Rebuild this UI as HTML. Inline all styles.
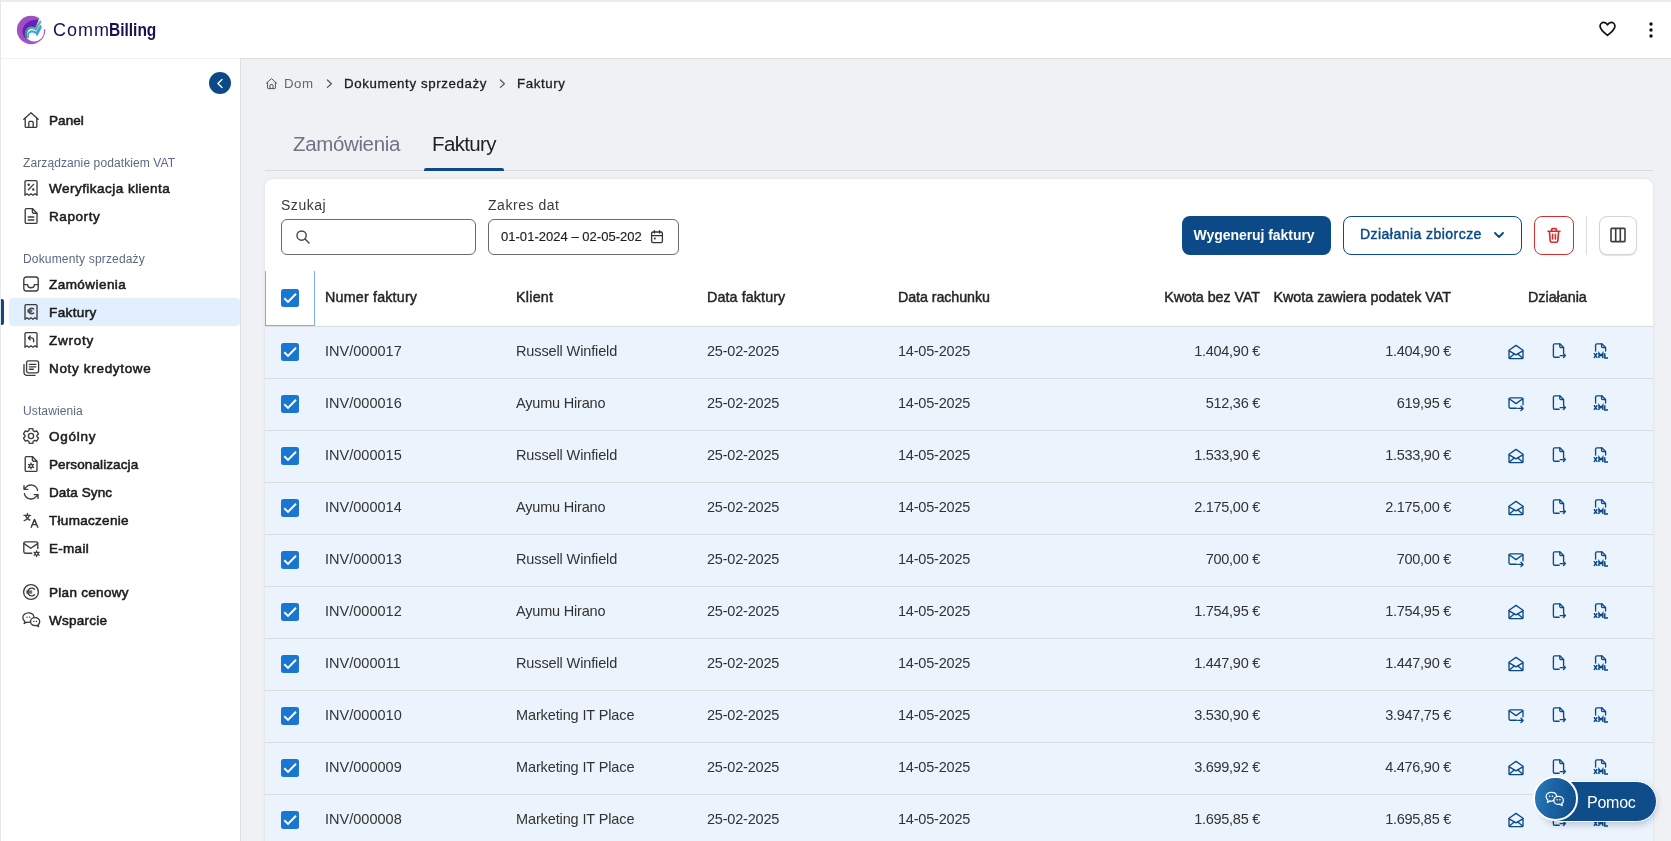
<!DOCTYPE html>
<html lang="pl">
<head>
<meta charset="utf-8">
<title>CommBilling - Faktury</title>
<style>
*{box-sizing:border-box;margin:0;padding:0}
html,body{width:1671px;height:841px;overflow:hidden;background:#f0f1f4;font-family:"Liberation Sans",sans-serif;color:#222}
.abs{position:absolute}
#app{will-change:transform;position:relative;width:1671px;height:841px;overflow:hidden;background:#f0f1f4}
/* top header */
#topbar{position:absolute;left:0;top:0;width:1671px;height:59px;background:#fff;border-top:2px solid #ececec;border-bottom:1px solid #dcdee2}
#leftedge{position:absolute;left:0;top:0;width:1px;height:841px;background:#e6e6e9;z-index:5}
#logotext{position:absolute;left:53px;top:18px;font-size:18px;line-height:24px;color:#1b1150;white-space:nowrap;letter-spacing:0}
#logotext2{position:absolute;left:109px;top:18px;font-size:18px;line-height:24px;color:#1b1150;white-space:nowrap;transform:scaleX(0.86);transform-origin:0 0}
/* sidebar */
#sidebar{position:absolute;left:0;top:59px;width:241px;height:782px;background:#fff;border-right:1px solid #dcdfe4}
.nav{position:absolute;left:49px;margin-top:1px;height:20px;line-height:20px;font-size:13.5px;font-weight:normal;-webkit-text-stroke:0.55px #1c1c1c;color:#1c1c1c;white-space:nowrap}
.sec{position:absolute;left:23px;height:16px;line-height:16px;font-size:12px;color:#5d6885;white-space:nowrap}
.ico{position:absolute;left:21px;width:20px;height:20px}
.ico svg{display:block;width:20px;height:20px;fill:none;stroke:#3c3c3c;stroke-width:1.35;stroke-linecap:round;stroke-linejoin:round}
#active{position:absolute;left:9px;top:298px;width:231px;height:28px;background:#e1efff;border-radius:4px}
#activebar{position:absolute;left:1px;top:299px;width:3px;height:26px;background:#0c4a87;border-radius:0 2px 2px 0}
#collapse{position:absolute;left:209px;top:72px;width:22px;height:22px;border-radius:50%;background:#0c4a87}
/* main */
.bc{position:absolute;top:75px;height:18px;line-height:18px;font-size:13.3px;white-space:nowrap}
.tab{position:absolute;top:130px;height:28px;line-height:28px;font-size:20.5px;white-space:nowrap}
#tabline{position:absolute;left:265px;top:170px;width:1388px;height:1px;background:#d9dbe0}
#tabul{position:absolute;left:424px;top:168px;width:80px;height:3px;background:#0c4a87;border-radius:2px 2px 0 0}
#card{position:absolute;left:265px;top:179px;width:1388px;height:680px;background:#fff;border-radius:8px 8px 0 0;box-shadow:0 0 3px rgba(20,30,50,0.11)}
.lbl{position:absolute;top:196px;height:18px;line-height:18px;font-size:14px;color:#3a3a3a;white-space:nowrap}
.inp{position:absolute;top:219px;height:36px;border:1px solid #6a6a6a;border-radius:6px;background:#fff}
.btn{position:absolute;top:216px;height:39px;border-radius:8px;font-size:14px;font-weight:bold;line-height:37px;white-space:nowrap}
/* table */
.th{position:absolute;top:288px;height:18px;line-height:18px;font-size:14.3px;font-weight:normal;-webkit-text-stroke:0.45px #262626;color:#262626;white-space:nowrap}
.row{position:absolute;left:265px;width:1388px;height:52px;background:#ebf3fc;border-top:1px solid #dcdcdc}
.td{position:absolute;top:15px;height:18px;line-height:18px;font-size:14.5px;color:#333;white-space:nowrap}
.r{text-align:right}
.cb{position:absolute;left:16px;top:16px;width:18px;height:18px;border-radius:2.5px;background:#1976d2}
.cb svg{display:block;width:18px;height:18px}
.act{position:absolute;top:15px;width:20px;height:20px}
.act svg{display:block;width:20px;height:20px;fill:none;stroke:#0c4a87;stroke-width:1.35;stroke-linecap:round;stroke-linejoin:round}
#n1{letter-spacing:0.067px}
#n2{letter-spacing:0.472px}
#n3{letter-spacing:0.586px}
#n4{letter-spacing:0.447px}
#n5{letter-spacing:0.381px}
#n6{letter-spacing:0.760px}
#n7{letter-spacing:0.673px}
#n8{letter-spacing:0.744px}
#n9{letter-spacing:0.108px}
#n10{letter-spacing:0.090px}
#n11{letter-spacing:0.297px}
#n12{letter-spacing:0.287px}
#n13{letter-spacing:0.295px}
#n14{letter-spacing:0.248px}
#s1{letter-spacing:0.103px}
#s2{letter-spacing:0.171px}
#s3{letter-spacing:0.122px}
#bc1{letter-spacing:0.511px}
#bc2{letter-spacing:0.602px}
#bc3{letter-spacing:0.576px}
#tab1{letter-spacing:-0.359px}
#tab2{letter-spacing:-0.643px}
#lbl1{letter-spacing:0.534px}
#lbl2{letter-spacing:0.540px}
#daterange{letter-spacing:0.027px}
#btn1{letter-spacing:-0.049px}
#btn2{letter-spacing:0.458px}
#h1{letter-spacing:0.185px}
#h2{letter-spacing:0.247px}
#h3{letter-spacing:0.102px}
#h4{letter-spacing:-0.083px}
#h5{letter-spacing:-0.052px}
#h6{letter-spacing:0.001px}
#h7{letter-spacing:-0.002px}
#pomoc{letter-spacing:-0.249px}
#lt1{letter-spacing:1.000px}
.c1{letter-spacing:0.012px}
.c3{letter-spacing:-0.197px}
.c4{letter-spacing:-0.197px}
.c5{letter-spacing:-0.272px}
.c6{letter-spacing:-0.272px}
.nrw{letter-spacing:-0.124px}
.nah{letter-spacing:-0.192px}
.nmp{letter-spacing:-0.125px}
</style>
</head>
<body>
<div id="app">
<div id="topbar"></div>
<div id="leftedge"></div>
<svg class="abs" style="left:16px;top:15px" width="31" height="31" viewBox="0 0 31 31">
  <defs>
    <linearGradient id="lg1" x1="0" y1="0" x2="0.6" y2="1"><stop offset="0" stop-color="#9c4fbe"/><stop offset="1" stop-color="#a653c4"/></linearGradient>
    <linearGradient id="lg3" x1="0" y1="1" x2="1" y2="0"><stop offset="0" stop-color="#3d8a6e"/><stop offset="0.5" stop-color="#5aa890"/><stop offset="1" stop-color="#66b89c"/></linearGradient>
  </defs>
  <circle cx="15.1" cy="15" r="14.2" fill="url(#lg1)"/>
  <circle cx="18.2" cy="16.6" r="9.9" fill="#fff"/>
  <path d="M24.6 2 L19.2 9.8 L23 13 L31 15 V0 H24 Z" fill="#fff"/>
  <path d="M22.6 5 C16.4 3.4 7.6 7.6 6.6 15 C6.2 18.6 7.4 21.6 9.4 23.6 L10.6 22 C9.4 18.4 9.8 15 12.4 13.4 C14.6 12 17.2 12.4 19.2 13.6 Z" fill="#6420be"/>
  <path d="M11.7 23.2 C10.9 19.5 11.8 16.8 14.2 15.7 C16 14.9 17.9 15.4 19.9 16.7 L24.6 9.6 L25.9 12.2 L21.2 21.4 L19.6 18.7 C17.4 17.3 15.4 17.1 14 18.1 C12.7 19.2 12.7 21 13 22.7 Z" fill="#41a0e2"/>
  <path d="M10.4 22.2 C9.5 17.8 10.6 14.4 13.5 13.2 C15.6 12.3 17.6 12.7 19.6 14.1 L24.2 6.8" fill="none" stroke="url(#lg3)" stroke-width="2.5" stroke-linecap="round" stroke-linejoin="miter"/>
</svg>
<div id="logotext"><span id="lt1">Comm</span></div><div id="logotext2"><b id="lt2">Billing</b></div>
<svg class="abs" style="left:1596.6px;top:19.4px" width="21" height="19.1" viewBox="0 0 22 20" fill="none" stroke="#111" stroke-width="1.8" stroke-linejoin="round">
  <path d="M11 17.2 C6.2 13.4 3.2 10.8 3.2 7.6 C3.2 5.2 5 3.6 7 3.6 C8.6 3.6 10 4.5 11 6 C12 4.5 13.4 3.6 15 3.6 C17 3.6 18.8 5.2 18.8 7.6 C18.8 10.8 15.8 13.4 11 17.2 Z"/>
</svg>
<svg class="abs" style="left:1647px;top:20px" width="8" height="20" viewBox="0 0 8 20" fill="#111">
  <circle cx="4" cy="4" r="1.7"/><circle cx="4" cy="10" r="1.7"/><circle cx="4" cy="16" r="1.7"/>
</svg>
<div id="sidebar"></div><div id="hb2" class="abs" style="left:0;top:58px;width:240px;height:1px;background:#f0f0f2"></div>
<div id="collapse"><svg width="22" height="22" viewBox="0 0 22 22" fill="none" stroke="#fff" stroke-width="1.3" stroke-linecap="round" stroke-linejoin="round"><path d="M13 7.5 L8.9 11.5 L13 15.5"/></svg></div>
<div id="active"></div><div id="activebar"></div>

<div class="ico" style="top:110px"><svg viewBox="0 0 20 20"><path d="M2.8 9.2 L10 2.8 L17.2 9.2"/><path d="M4.2 8.2 V16.4 a1 1 0 0 0 1 1 H14.8 a1 1 0 0 0 1-1 V8.2"/><path d="M7.8 17.2 V12.4 a1 1 0 0 1 1-1 h2.4 a1 1 0 0 1 1 1 V17.2"/></svg></div>
<div class="nav" id="n1" style="top:110px">Panel</div>

<div class="sec" id="s1" style="top:155px">Zarządzanie podatkiem VAT</div>

<div class="ico" style="top:178px"><svg viewBox="0 0 20 20"><path d="M4 17.3 V3.8 a1.2 1.2 0 0 1 1.2-1.2 h9.6 a1.2 1.2 0 0 1 1.2 1.2 V17.3 l-2-1.5 -2 1.5 -2-1.5 -2 1.5 -2-1.5 -2 1.5 Z"/><path d="M12.6 6.4 L7.4 11.8"/><circle cx="7.7" cy="6.8" r="0.55" fill="#3a3a3a"/><circle cx="12.3" cy="11.4" r="0.55" fill="#3a3a3a"/></svg></div>
<div class="nav" id="n2" style="top:178px">Weryfikacja klienta</div>

<div class="ico" style="top:206px"><svg viewBox="0 0 20 20"><path d="M5.4 2.6 h6 l4.6 4.6 V16.2 a1.2 1.2 0 0 1 -1.2 1.2 H5.4 a1.2 1.2 0 0 1 -1.2-1.2 V3.8 a1.2 1.2 0 0 1 1.2-1.2 Z"/><path d="M11.4 2.8 V6 a1.2 1.2 0 0 0 1.2 1.2 H15.8"/><path d="M7.2 11 h5.6 M7.2 14 h5.6"/></svg></div>
<div class="nav" id="n3" style="top:206px">Raporty</div>

<div class="sec" id="s2" style="top:251px">Dokumenty sprzedaży</div>

<div class="ico" style="top:274px"><svg viewBox="0 0 20 20"><rect x="2.8" y="3" width="14.4" height="14" rx="2.4"/><path d="M2.8 10.6 H6.6 a3.4 3.2 0 0 0 6.8 0 H17.2"/></svg></div>
<div class="nav" id="n4" style="top:274px">Zamówienia</div>

<div class="ico" style="top:302px"><svg viewBox="0 0 20 20"><path d="M4 17.3 V3.8 a1.2 1.2 0 0 1 1.2-1.2 h9.6 a1.2 1.2 0 0 1 1.2 1.2 V17.3 l-2-1.5 -2 1.5 -2-1.5 -2 1.5 -2-1.5 -2 1.5 Z"/><path d="M12.7 7 a2.9 2.9 0 1 0 0 4 M6.8 8.2 h4 M6.8 9.8 h4" stroke-width="1.3"/></svg></div>
<div class="nav" id="n5" style="top:302px">Faktury</div>

<div class="ico" style="top:330px"><svg viewBox="0 0 20 20"><path d="M4 17.3 V3.8 a1.2 1.2 0 0 1 1.2-1.2 h9.6 a1.2 1.2 0 0 1 1.2 1.2 V17.3 l-2-1.5 -2 1.5 -2-1.5 -2 1.5 -2-1.5 -2 1.5 Z"/><path d="M9.2 6 L7.4 7.9 L9.2 9.8 M7.6 7.9 H10.6 a2 2 0 0 1 2 2 V11.8" stroke-width="1.4"/></svg></div>
<div class="nav" id="n6" style="top:330px">Zwroty</div>

<div class="ico" style="top:358px"><svg viewBox="0 0 20 20"><rect x="5.6" y="2.8" width="12" height="12" rx="1.8"/><path d="M8.4 6.4 h6.4 M8.4 8.8 h6.4 M8.4 11.2 h4"/><path d="M3 6.6 V14.6 a2.8 2.8 0 0 0 2.8 2.8 H14"/></svg></div>
<div class="nav" id="n7" style="top:358px">Noty kredytowe</div>

<div class="sec" id="s3" style="top:403px">Ustawienia</div>

<div class="ico" style="top:426px"><svg viewBox="0 0 20 20"><path d="M8.3 2.6 h3.4 l0.5 2.1 1.5 0.9 2.1-0.6 1.7 2.9 -1.6 1.5 v1.2 l1.6 1.5 -1.7 2.9 -2.1-0.6 -1.5 0.9 -0.5 2.1 h-3.4 l-0.5-2.1 -1.5-0.9 -2.1 0.6 -1.7-2.9 1.6-1.5 v-1.2 l-1.6-1.5 1.7-2.9 2.1 0.6 1.5-0.9 Z"/><circle cx="10" cy="10" r="2.6"/></svg></div>
<div class="nav" id="n8" style="top:426px">Ogólny</div>

<div class="ico" style="top:454px"><svg viewBox="0 0 20 20"><path d="M5.4 2.6 h6 l4.6 4.6 V16.2 a1.2 1.2 0 0 1 -1.2 1.2 H5.4 a1.2 1.2 0 0 1 -1.2-1.2 V3.8 a1.2 1.2 0 0 1 1.2-1.2 Z"/><path d="M11.4 2.8 V6 a1.2 1.2 0 0 0 1.2 1.2 H15.8"/><circle cx="10" cy="11.9" r="1.6" stroke-width="1.3"/><path d="M10 9 v1.1 M10 13.7 v1.1 M7.5 10.45 l0.95 0.55 M11.55 12.8 l0.95 0.55 M12.5 10.45 l-0.95 0.55 M8.45 12.8 l-0.95 0.55" stroke-width="1.3"/></svg></div>
<div class="nav" id="n9" style="top:454px">Personalizacja</div>

<div class="ico" style="top:482px"><svg viewBox="0 0 20 20"><path d="M16.6 8.4 A6.8 6.8 0 0 0 4.6 5.6 L3 7.4 M3 3.6 V7.4 H6.8"/><path d="M3.4 11.6 A6.8 6.8 0 0 0 15.4 14.4 L17 12.6 M17 16.4 V12.6 H13.2"/></svg></div>
<div class="nav" id="n10" style="top:482px">Data Sync</div>

<div class="ico" style="top:510px"><svg viewBox="0 0 20 20"><path d="M3 5.4 H9.4 M6.4 3.4 V5.4 M8.2 5.4 C7.6 8 5.8 9.8 3.2 10.6 M4.6 5.6 C5.2 7.8 6.8 9.4 8.8 10"/><path d="M10.2 17.2 L13.5 9.4 L16.8 17.2 M11.4 14.6 H15.6" stroke-width="1.45"/></svg></div>
<div class="nav" id="n11" style="top:510px">Tłumaczenie</div>

<div class="ico" style="top:538px"><svg viewBox="0 0 20 20"><path d="M10.8 15.2 H4.4 a1.6 1.6 0 0 1 -1.6-1.6 V5.4 a1.6 1.6 0 0 1 1.6-1.6 H15.2 a1.6 1.6 0 0 1 1.6 1.6 V10.6"/><path d="M3 5.6 L9.8 10.2 L16.6 5.6"/><circle cx="15.6" cy="15.7" r="1.5" stroke-width="1.3"/><path d="M15.6 12.8 v1.2 M15.6 17.4 v1.2 M13.1 14.25 l1.05 0.6 M17.05 16.55 l1.05 0.6 M18.1 14.25 l-1.05 0.6 M14.15 16.55 l-1.05 0.6" stroke-width="1.3"/></svg></div>
<div class="nav" id="n12" style="top:538px">E-mail</div>

<div class="ico" style="top:582px"><svg viewBox="0 0 20 20"><circle cx="10" cy="10" r="7.4"/><path d="M13.5 7.3 a3.9 3.9 0 1 0 0 5.4 M5.7 9.1 h5 M5.7 10.9 h5" stroke-width="1.35"/></svg></div>
<div class="nav" id="n13" style="top:582px">Plan cenowy</div>

<div class="ico" style="top:610px"><svg viewBox="0 0 20 20"><path d="M9.5 11.9 C8.9 12.2 8.2 12.3 7.4 12.3 C6.9 12.3 6.4 12.25 5.9 12.1 L3.2 13.5 L3.8 11.2 C2.6 10.3 1.8 9 1.8 7.6 C1.8 5 4.3 2.9 7.4 2.9 C10.3 2.9 12.7 4.7 13 7.1"/><path d="M14.1 7.6 C11.5 7.6 9.5 9.4 9.5 11.6 C9.5 13.8 11.5 15.6 14.1 15.6 C14.6 15.6 15.1 15.55 15.5 15.4 L17.6 16.6 L17.2 14.6 C18.2 13.9 18.7 12.8 18.7 11.6 C18.7 9.4 16.7 7.6 14.1 7.6 Z"/><path d="M5.9 7.2 h0.3 M8.5 7.2 h0.3 M12.7 11.4 h0.3 M15.3 11.4 h0.3" stroke-width="1.2"/></svg></div>
<div class="nav" id="n14" style="top:610px">Wsparcie</div>
<svg class="abs" style="left:265px;top:77px" width="13" height="13" viewBox="0 0 13 13" fill="none" stroke="#555" stroke-width="1" stroke-linejoin="round" stroke-linecap="round"><path d="M1.4 6.2 L6.5 1.6 L11.6 6.2"/><path d="M2.6 5.4 V11 a0.6 0.6 0 0 0 0.6 0.6 H9.8 a0.6 0.6 0 0 0 0.6-0.6 V5.4"/><path d="M5 11.4 V8.2 a0.6 0.6 0 0 1 0.6-0.6 h1.8 a0.6 0.6 0 0 1 0.6 0.6 V11.4"/></svg>
<div class="bc" id="bc1" style="left:284px;color:#686868">Dom</div>
<svg class="abs" style="left:325px;top:78px" width="9" height="12" viewBox="0 0 9 12" fill="none" stroke="#555" stroke-width="1.2" stroke-linecap="round" stroke-linejoin="round"><path d="M2.4 2 L6.4 5.7 L2.4 9.4"/></svg>
<div class="bc" id="bc2" style="left:344px;color:#1d1d1d;-webkit-text-stroke:0.3px #1d1d1d">Dokumenty sprzedaży</div>
<svg class="abs" style="left:498px;top:78px" width="9" height="12" viewBox="0 0 9 12" fill="none" stroke="#555" stroke-width="1.2" stroke-linecap="round" stroke-linejoin="round"><path d="M2.4 2 L6.4 5.7 L2.4 9.4"/></svg>
<div class="bc" id="bc3" style="left:517px;color:#1d1d1d;-webkit-text-stroke:0.3px #1d1d1d">Faktury</div>

<div class="tab" id="tab1" style="left:293px;color:#6e7383">Zamówienia</div>
<div class="tab" id="tab2" style="left:432px;color:#222">Faktury</div>
<div id="tabline"></div><div id="tabul"></div>

<div id="card"></div>
<div class="lbl" id="lbl1" style="left:281px">Szukaj</div>
<div class="lbl" id="lbl2" style="left:488px">Zakres dat</div>
<div class="inp" style="left:281px;width:195px"></div>
<svg class="abs" style="left:295px;top:229px" width="16" height="16" viewBox="0 0 16 16" fill="none" stroke="#444" stroke-width="1.4" stroke-linecap="round"><circle cx="6.6" cy="6.6" r="4.6"/><path d="M10 10 L14 14"/></svg>
<div class="inp" style="left:488px;width:191px"></div>
<div class="abs" id="daterange" style="left:501px;top:228px;height:18px;line-height:18px;font-size:13px;color:#1c1c1c;-webkit-text-stroke:0.15px #1c1c1c;white-space:nowrap">01-01-2024 – 02-05-202</div>
<svg class="abs" style="left:649px;top:228px" width="16" height="18" viewBox="0 0 16 18" fill="none" stroke="#333" stroke-width="1.3" stroke-linecap="round" stroke-linejoin="round"><rect x="2.6" y="4" width="10.8" height="10.6" rx="1.4"/><path d="M2.8 7.6 H13.2 M5.4 2.6 V5 M10.6 2.6 V5"/><rect x="4.9" y="9.6" width="1.8" height="1.8" fill="#333" stroke="none"/></svg>

<div class="btn" id="btn1" style="left:1182px;width:149px;background:#0c4a87;color:#fff;text-align:left;padding-left:11.5px;line-height:38px">Wygeneruj faktury</div>
<div class="btn" style="left:1343px;width:179px;background:#fff;border:1px solid #0c4a87;font-weight:normal;color:#0c4a87"><span id="btn2" style="-webkit-text-stroke:0.45px #0c4a87;position:absolute;left:16px;top:0;line-height:35px">Działania zbiorcze</span></div>
<svg class="abs" style="left:1492px;top:229px" width="14" height="12" viewBox="0 0 14 12" fill="none" stroke="#0c4a87" stroke-width="1.9" stroke-linecap="round" stroke-linejoin="round"><path d="M3 4 L7 8 L11 4"/></svg>
<div class="btn" style="left:1534px;width:40px;background:#fff;border:1px solid #d32f2f"></div>
<svg class="abs" style="left:1545px;top:226px" width="18" height="19" viewBox="0 0 18 19" fill="none" stroke="#d32f2f" stroke-width="1.65" stroke-linecap="round" stroke-linejoin="round"><path d="M3 5.2 H15 M6.6 5 V3.6 a1 1 0 0 1 1-1 h2.8 a1 1 0 0 1 1 1 V5 M4.4 5.4 L5.2 15 a1.4 1.4 0 0 0 1.4 1.2 h4.8 a1.4 1.4 0 0 0 1.4-1.2 L13.6 5.4 M7.6 8.4 V13 M10.4 8.4 V13"/></svg>
<div class="abs" style="left:1586px;top:216px;width:1px;height:39px;background:#dcdcdc"></div>
<div class="btn" style="left:1599px;width:38px;background:#fff;border:1px solid #d4d4d4;box-shadow:0 1px 1px rgba(0,0,0,0.12)"></div>
<svg class="abs" style="left:1608px;top:225px" width="20" height="20" viewBox="0 0 20 20" fill="none" stroke="#3c3c3c" stroke-width="1.6" stroke-linejoin="round"><rect x="3" y="3.4" width="14" height="13.2" rx="0.8"/><path d="M7.7 3.4 V16.6 M12.3 3.4 V16.6"/></svg>
<div class="abs" style="left:265px;top:326px;width:1388px;height:1px;background:#dcdcdc"></div>
<div class="abs" style="left:265px;top:271px;width:50px;height:55px;border:1px solid #7db0ea;border-top:none"></div>
<div class="cb" style="left:281px;top:289px"><svg viewBox="0 0 18 18"><path d="M3.3 9.3 L7 12.9 L15 4.8" fill="none" stroke="#fff" stroke-width="1.95" stroke-linecap="butt" stroke-linejoin="miter"/></svg></div>
<div class="th" id="h1" style="left:325px">Numer faktury</div>
<div class="th" id="h2" style="left:516px">Klient</div>
<div class="th" id="h3" style="left:707px">Data faktury</div>
<div class="th" id="h4" style="left:898px">Data rachunku</div>
<div class="th r" id="h5" style="right:411px">Kwota bez VAT</div>
<div class="th r" id="h6" style="right:220px">Kwota zawiera podatek VAT</div>
<div class="th" id="h7" style="left:1528px">Działania</div>
<div class="row" style="top:326px"><div class="cb"><svg viewBox="0 0 18 18"><path d="M3.3 9.3 L7 12.9 L15 4.8" fill="none" stroke="#fff" stroke-width="1.95" stroke-linecap="butt" stroke-linejoin="miter"/></svg></div><div class="td c1" style="left:60px">INV/000017</div><div class="td c2 nrw" style="left:251px">Russell Winfield</div><div class="td c3" style="left:442px">25-02-2025</div><div class="td c4" style="left:633px">14-05-2025</div><div class="td c5 r" style="right:393px">1.404,90 €</div><div class="td c6 r" style="right:202px">1.404,90 €</div><div class="act" style="left:1241px"><svg viewBox="0 0 20 20"><path d="M3 8.2 L10 3.4 L17 8.2 V15.4 a1.2 1.2 0 0 1 -1.2 1.2 H4.2 a1.2 1.2 0 0 1 -1.2-1.2 Z"/><path d="M3.2 8.8 L10 12.8 L16.8 8.8"/><path d="M3.4 16 L8.2 11.9 M16.6 16 L11.8 11.9"/></svg></div><div class="act" style="left:1284px;top:14px"><svg viewBox="0 0 20 20"><path d="M10.2 16.2 H5.6 a1.2 1.2 0 0 1 -1.2-1.2 V4 a1.2 1.2 0 0 1 1.2-1.2 h5.2 l3.8 3.8 V12.2"/><path d="M10.8 3 V5.6 a1 1 0 0 0 1 1 H14.4"/><path d="M11.2 14.6 H16.4 M14.5 12.7 L16.4 14.6 L14.5 16.5"/></svg></div><div class="act" style="left:1325.5px;top:14px"><svg viewBox="0 0 20 20"><path d="M4.6 10 V4 a1.2 1.2 0 0 1 1.2-1.2 h5 l3.8 3.8 V10"/><path d="M10.6 3 V5.6 a1 1 0 0 0 1 1 H14.2"/><path d="M3 12.2 L6.2 16.9 M6.2 12.2 L3 16.9 M8 16.9 V12.2 L9.9 14.8 L11.8 12.2 V16.9 M13.8 12.2 V16.9 H17" stroke-width="1.5" stroke-linecap="butt" stroke-linejoin="miter"/></svg></div></div>
<div class="row" style="top:378px"><div class="cb"><svg viewBox="0 0 18 18"><path d="M3.3 9.3 L7 12.9 L15 4.8" fill="none" stroke="#fff" stroke-width="1.95" stroke-linecap="butt" stroke-linejoin="miter"/></svg></div><div class="td c1" style="left:60px">INV/000016</div><div class="td c2 nah" style="left:251px">Ayumu Hirano</div><div class="td c3" style="left:442px">25-02-2025</div><div class="td c4" style="left:633px">14-05-2025</div><div class="td c5 r" style="right:393px">512,36 €</div><div class="td c6 r" style="right:202px">619,95 €</div><div class="act" style="left:1241px"><svg viewBox="0 0 20 20"><path d="M10.4 14.2 H4.4 a1.4 1.4 0 0 1 -1.4-1.4 V5.2 a1.4 1.4 0 0 1 1.4-1.4 H15.6 a1.4 1.4 0 0 1 1.4 1.4 V10.8"/><path d="M3.2 4.8 L10 9.6 L16.8 4.8"/><path d="M11.8 14.4 H17 M15 12.3 L17.1 14.4 L15 16.5"/></svg></div><div class="act" style="left:1284px;top:14px"><svg viewBox="0 0 20 20"><path d="M10.2 16.2 H5.6 a1.2 1.2 0 0 1 -1.2-1.2 V4 a1.2 1.2 0 0 1 1.2-1.2 h5.2 l3.8 3.8 V12.2"/><path d="M10.8 3 V5.6 a1 1 0 0 0 1 1 H14.4"/><path d="M11.2 14.6 H16.4 M14.5 12.7 L16.4 14.6 L14.5 16.5"/></svg></div><div class="act" style="left:1325.5px;top:14px"><svg viewBox="0 0 20 20"><path d="M4.6 10 V4 a1.2 1.2 0 0 1 1.2-1.2 h5 l3.8 3.8 V10"/><path d="M10.6 3 V5.6 a1 1 0 0 0 1 1 H14.2"/><path d="M3 12.2 L6.2 16.9 M6.2 12.2 L3 16.9 M8 16.9 V12.2 L9.9 14.8 L11.8 12.2 V16.9 M13.8 12.2 V16.9 H17" stroke-width="1.5" stroke-linecap="butt" stroke-linejoin="miter"/></svg></div></div>
<div class="row" style="top:430px"><div class="cb"><svg viewBox="0 0 18 18"><path d="M3.3 9.3 L7 12.9 L15 4.8" fill="none" stroke="#fff" stroke-width="1.95" stroke-linecap="butt" stroke-linejoin="miter"/></svg></div><div class="td c1" style="left:60px">INV/000015</div><div class="td c2 nrw" style="left:251px">Russell Winfield</div><div class="td c3" style="left:442px">25-02-2025</div><div class="td c4" style="left:633px">14-05-2025</div><div class="td c5 r" style="right:393px">1.533,90 €</div><div class="td c6 r" style="right:202px">1.533,90 €</div><div class="act" style="left:1241px"><svg viewBox="0 0 20 20"><path d="M3 8.2 L10 3.4 L17 8.2 V15.4 a1.2 1.2 0 0 1 -1.2 1.2 H4.2 a1.2 1.2 0 0 1 -1.2-1.2 Z"/><path d="M3.2 8.8 L10 12.8 L16.8 8.8"/><path d="M3.4 16 L8.2 11.9 M16.6 16 L11.8 11.9"/></svg></div><div class="act" style="left:1284px;top:14px"><svg viewBox="0 0 20 20"><path d="M10.2 16.2 H5.6 a1.2 1.2 0 0 1 -1.2-1.2 V4 a1.2 1.2 0 0 1 1.2-1.2 h5.2 l3.8 3.8 V12.2"/><path d="M10.8 3 V5.6 a1 1 0 0 0 1 1 H14.4"/><path d="M11.2 14.6 H16.4 M14.5 12.7 L16.4 14.6 L14.5 16.5"/></svg></div><div class="act" style="left:1325.5px;top:14px"><svg viewBox="0 0 20 20"><path d="M4.6 10 V4 a1.2 1.2 0 0 1 1.2-1.2 h5 l3.8 3.8 V10"/><path d="M10.6 3 V5.6 a1 1 0 0 0 1 1 H14.2"/><path d="M3 12.2 L6.2 16.9 M6.2 12.2 L3 16.9 M8 16.9 V12.2 L9.9 14.8 L11.8 12.2 V16.9 M13.8 12.2 V16.9 H17" stroke-width="1.5" stroke-linecap="butt" stroke-linejoin="miter"/></svg></div></div>
<div class="row" style="top:482px"><div class="cb"><svg viewBox="0 0 18 18"><path d="M3.3 9.3 L7 12.9 L15 4.8" fill="none" stroke="#fff" stroke-width="1.95" stroke-linecap="butt" stroke-linejoin="miter"/></svg></div><div class="td c1" style="left:60px">INV/000014</div><div class="td c2 nah" style="left:251px">Ayumu Hirano</div><div class="td c3" style="left:442px">25-02-2025</div><div class="td c4" style="left:633px">14-05-2025</div><div class="td c5 r" style="right:393px">2.175,00 €</div><div class="td c6 r" style="right:202px">2.175,00 €</div><div class="act" style="left:1241px"><svg viewBox="0 0 20 20"><path d="M3 8.2 L10 3.4 L17 8.2 V15.4 a1.2 1.2 0 0 1 -1.2 1.2 H4.2 a1.2 1.2 0 0 1 -1.2-1.2 Z"/><path d="M3.2 8.8 L10 12.8 L16.8 8.8"/><path d="M3.4 16 L8.2 11.9 M16.6 16 L11.8 11.9"/></svg></div><div class="act" style="left:1284px;top:14px"><svg viewBox="0 0 20 20"><path d="M10.2 16.2 H5.6 a1.2 1.2 0 0 1 -1.2-1.2 V4 a1.2 1.2 0 0 1 1.2-1.2 h5.2 l3.8 3.8 V12.2"/><path d="M10.8 3 V5.6 a1 1 0 0 0 1 1 H14.4"/><path d="M11.2 14.6 H16.4 M14.5 12.7 L16.4 14.6 L14.5 16.5"/></svg></div><div class="act" style="left:1325.5px;top:14px"><svg viewBox="0 0 20 20"><path d="M4.6 10 V4 a1.2 1.2 0 0 1 1.2-1.2 h5 l3.8 3.8 V10"/><path d="M10.6 3 V5.6 a1 1 0 0 0 1 1 H14.2"/><path d="M3 12.2 L6.2 16.9 M6.2 12.2 L3 16.9 M8 16.9 V12.2 L9.9 14.8 L11.8 12.2 V16.9 M13.8 12.2 V16.9 H17" stroke-width="1.5" stroke-linecap="butt" stroke-linejoin="miter"/></svg></div></div>
<div class="row" style="top:534px"><div class="cb"><svg viewBox="0 0 18 18"><path d="M3.3 9.3 L7 12.9 L15 4.8" fill="none" stroke="#fff" stroke-width="1.95" stroke-linecap="butt" stroke-linejoin="miter"/></svg></div><div class="td c1" style="left:60px">INV/000013</div><div class="td c2 nrw" style="left:251px">Russell Winfield</div><div class="td c3" style="left:442px">25-02-2025</div><div class="td c4" style="left:633px">14-05-2025</div><div class="td c5 r" style="right:393px">700,00 €</div><div class="td c6 r" style="right:202px">700,00 €</div><div class="act" style="left:1241px"><svg viewBox="0 0 20 20"><path d="M10.4 14.2 H4.4 a1.4 1.4 0 0 1 -1.4-1.4 V5.2 a1.4 1.4 0 0 1 1.4-1.4 H15.6 a1.4 1.4 0 0 1 1.4 1.4 V10.8"/><path d="M3.2 4.8 L10 9.6 L16.8 4.8"/><path d="M11.8 14.4 H17 M15 12.3 L17.1 14.4 L15 16.5"/></svg></div><div class="act" style="left:1284px;top:14px"><svg viewBox="0 0 20 20"><path d="M10.2 16.2 H5.6 a1.2 1.2 0 0 1 -1.2-1.2 V4 a1.2 1.2 0 0 1 1.2-1.2 h5.2 l3.8 3.8 V12.2"/><path d="M10.8 3 V5.6 a1 1 0 0 0 1 1 H14.4"/><path d="M11.2 14.6 H16.4 M14.5 12.7 L16.4 14.6 L14.5 16.5"/></svg></div><div class="act" style="left:1325.5px;top:14px"><svg viewBox="0 0 20 20"><path d="M4.6 10 V4 a1.2 1.2 0 0 1 1.2-1.2 h5 l3.8 3.8 V10"/><path d="M10.6 3 V5.6 a1 1 0 0 0 1 1 H14.2"/><path d="M3 12.2 L6.2 16.9 M6.2 12.2 L3 16.9 M8 16.9 V12.2 L9.9 14.8 L11.8 12.2 V16.9 M13.8 12.2 V16.9 H17" stroke-width="1.5" stroke-linecap="butt" stroke-linejoin="miter"/></svg></div></div>
<div class="row" style="top:586px"><div class="cb"><svg viewBox="0 0 18 18"><path d="M3.3 9.3 L7 12.9 L15 4.8" fill="none" stroke="#fff" stroke-width="1.95" stroke-linecap="butt" stroke-linejoin="miter"/></svg></div><div class="td c1" style="left:60px">INV/000012</div><div class="td c2 nah" style="left:251px">Ayumu Hirano</div><div class="td c3" style="left:442px">25-02-2025</div><div class="td c4" style="left:633px">14-05-2025</div><div class="td c5 r" style="right:393px">1.754,95 €</div><div class="td c6 r" style="right:202px">1.754,95 €</div><div class="act" style="left:1241px"><svg viewBox="0 0 20 20"><path d="M3 8.2 L10 3.4 L17 8.2 V15.4 a1.2 1.2 0 0 1 -1.2 1.2 H4.2 a1.2 1.2 0 0 1 -1.2-1.2 Z"/><path d="M3.2 8.8 L10 12.8 L16.8 8.8"/><path d="M3.4 16 L8.2 11.9 M16.6 16 L11.8 11.9"/></svg></div><div class="act" style="left:1284px;top:14px"><svg viewBox="0 0 20 20"><path d="M10.2 16.2 H5.6 a1.2 1.2 0 0 1 -1.2-1.2 V4 a1.2 1.2 0 0 1 1.2-1.2 h5.2 l3.8 3.8 V12.2"/><path d="M10.8 3 V5.6 a1 1 0 0 0 1 1 H14.4"/><path d="M11.2 14.6 H16.4 M14.5 12.7 L16.4 14.6 L14.5 16.5"/></svg></div><div class="act" style="left:1325.5px;top:14px"><svg viewBox="0 0 20 20"><path d="M4.6 10 V4 a1.2 1.2 0 0 1 1.2-1.2 h5 l3.8 3.8 V10"/><path d="M10.6 3 V5.6 a1 1 0 0 0 1 1 H14.2"/><path d="M3 12.2 L6.2 16.9 M6.2 12.2 L3 16.9 M8 16.9 V12.2 L9.9 14.8 L11.8 12.2 V16.9 M13.8 12.2 V16.9 H17" stroke-width="1.5" stroke-linecap="butt" stroke-linejoin="miter"/></svg></div></div>
<div class="row" style="top:638px"><div class="cb"><svg viewBox="0 0 18 18"><path d="M3.3 9.3 L7 12.9 L15 4.8" fill="none" stroke="#fff" stroke-width="1.95" stroke-linecap="butt" stroke-linejoin="miter"/></svg></div><div class="td c1" style="left:60px">INV/000011</div><div class="td c2 nrw" style="left:251px">Russell Winfield</div><div class="td c3" style="left:442px">25-02-2025</div><div class="td c4" style="left:633px">14-05-2025</div><div class="td c5 r" style="right:393px">1.447,90 €</div><div class="td c6 r" style="right:202px">1.447,90 €</div><div class="act" style="left:1241px"><svg viewBox="0 0 20 20"><path d="M3 8.2 L10 3.4 L17 8.2 V15.4 a1.2 1.2 0 0 1 -1.2 1.2 H4.2 a1.2 1.2 0 0 1 -1.2-1.2 Z"/><path d="M3.2 8.8 L10 12.8 L16.8 8.8"/><path d="M3.4 16 L8.2 11.9 M16.6 16 L11.8 11.9"/></svg></div><div class="act" style="left:1284px;top:14px"><svg viewBox="0 0 20 20"><path d="M10.2 16.2 H5.6 a1.2 1.2 0 0 1 -1.2-1.2 V4 a1.2 1.2 0 0 1 1.2-1.2 h5.2 l3.8 3.8 V12.2"/><path d="M10.8 3 V5.6 a1 1 0 0 0 1 1 H14.4"/><path d="M11.2 14.6 H16.4 M14.5 12.7 L16.4 14.6 L14.5 16.5"/></svg></div><div class="act" style="left:1325.5px;top:14px"><svg viewBox="0 0 20 20"><path d="M4.6 10 V4 a1.2 1.2 0 0 1 1.2-1.2 h5 l3.8 3.8 V10"/><path d="M10.6 3 V5.6 a1 1 0 0 0 1 1 H14.2"/><path d="M3 12.2 L6.2 16.9 M6.2 12.2 L3 16.9 M8 16.9 V12.2 L9.9 14.8 L11.8 12.2 V16.9 M13.8 12.2 V16.9 H17" stroke-width="1.5" stroke-linecap="butt" stroke-linejoin="miter"/></svg></div></div>
<div class="row" style="top:690px"><div class="cb"><svg viewBox="0 0 18 18"><path d="M3.3 9.3 L7 12.9 L15 4.8" fill="none" stroke="#fff" stroke-width="1.95" stroke-linecap="butt" stroke-linejoin="miter"/></svg></div><div class="td c1" style="left:60px">INV/000010</div><div class="td c2 nmp" style="left:251px">Marketing IT Place</div><div class="td c3" style="left:442px">25-02-2025</div><div class="td c4" style="left:633px">14-05-2025</div><div class="td c5 r" style="right:393px">3.530,90 €</div><div class="td c6 r" style="right:202px">3.947,75 €</div><div class="act" style="left:1241px"><svg viewBox="0 0 20 20"><path d="M10.4 14.2 H4.4 a1.4 1.4 0 0 1 -1.4-1.4 V5.2 a1.4 1.4 0 0 1 1.4-1.4 H15.6 a1.4 1.4 0 0 1 1.4 1.4 V10.8"/><path d="M3.2 4.8 L10 9.6 L16.8 4.8"/><path d="M11.8 14.4 H17 M15 12.3 L17.1 14.4 L15 16.5"/></svg></div><div class="act" style="left:1284px;top:14px"><svg viewBox="0 0 20 20"><path d="M10.2 16.2 H5.6 a1.2 1.2 0 0 1 -1.2-1.2 V4 a1.2 1.2 0 0 1 1.2-1.2 h5.2 l3.8 3.8 V12.2"/><path d="M10.8 3 V5.6 a1 1 0 0 0 1 1 H14.4"/><path d="M11.2 14.6 H16.4 M14.5 12.7 L16.4 14.6 L14.5 16.5"/></svg></div><div class="act" style="left:1325.5px;top:14px"><svg viewBox="0 0 20 20"><path d="M4.6 10 V4 a1.2 1.2 0 0 1 1.2-1.2 h5 l3.8 3.8 V10"/><path d="M10.6 3 V5.6 a1 1 0 0 0 1 1 H14.2"/><path d="M3 12.2 L6.2 16.9 M6.2 12.2 L3 16.9 M8 16.9 V12.2 L9.9 14.8 L11.8 12.2 V16.9 M13.8 12.2 V16.9 H17" stroke-width="1.5" stroke-linecap="butt" stroke-linejoin="miter"/></svg></div></div>
<div class="row" style="top:742px"><div class="cb"><svg viewBox="0 0 18 18"><path d="M3.3 9.3 L7 12.9 L15 4.8" fill="none" stroke="#fff" stroke-width="1.95" stroke-linecap="butt" stroke-linejoin="miter"/></svg></div><div class="td c1" style="left:60px">INV/000009</div><div class="td c2 nmp" style="left:251px">Marketing IT Place</div><div class="td c3" style="left:442px">25-02-2025</div><div class="td c4" style="left:633px">14-05-2025</div><div class="td c5 r" style="right:393px">3.699,92 €</div><div class="td c6 r" style="right:202px">4.476,90 €</div><div class="act" style="left:1241px"><svg viewBox="0 0 20 20"><path d="M3 8.2 L10 3.4 L17 8.2 V15.4 a1.2 1.2 0 0 1 -1.2 1.2 H4.2 a1.2 1.2 0 0 1 -1.2-1.2 Z"/><path d="M3.2 8.8 L10 12.8 L16.8 8.8"/><path d="M3.4 16 L8.2 11.9 M16.6 16 L11.8 11.9"/></svg></div><div class="act" style="left:1284px;top:14px"><svg viewBox="0 0 20 20"><path d="M10.2 16.2 H5.6 a1.2 1.2 0 0 1 -1.2-1.2 V4 a1.2 1.2 0 0 1 1.2-1.2 h5.2 l3.8 3.8 V12.2"/><path d="M10.8 3 V5.6 a1 1 0 0 0 1 1 H14.4"/><path d="M11.2 14.6 H16.4 M14.5 12.7 L16.4 14.6 L14.5 16.5"/></svg></div><div class="act" style="left:1325.5px;top:14px"><svg viewBox="0 0 20 20"><path d="M4.6 10 V4 a1.2 1.2 0 0 1 1.2-1.2 h5 l3.8 3.8 V10"/><path d="M10.6 3 V5.6 a1 1 0 0 0 1 1 H14.2"/><path d="M3 12.2 L6.2 16.9 M6.2 12.2 L3 16.9 M8 16.9 V12.2 L9.9 14.8 L11.8 12.2 V16.9 M13.8 12.2 V16.9 H17" stroke-width="1.5" stroke-linecap="butt" stroke-linejoin="miter"/></svg></div></div>
<div class="row" style="top:794px"><div class="cb"><svg viewBox="0 0 18 18"><path d="M3.3 9.3 L7 12.9 L15 4.8" fill="none" stroke="#fff" stroke-width="1.95" stroke-linecap="butt" stroke-linejoin="miter"/></svg></div><div class="td c1" style="left:60px">INV/000008</div><div class="td c2 nmp" style="left:251px">Marketing IT Place</div><div class="td c3" style="left:442px">25-02-2025</div><div class="td c4" style="left:633px">14-05-2025</div><div class="td c5 r" style="right:393px">1.695,85 €</div><div class="td c6 r" style="right:202px">1.695,85 €</div><div class="act" style="left:1241px"><svg viewBox="0 0 20 20"><path d="M3 8.2 L10 3.4 L17 8.2 V15.4 a1.2 1.2 0 0 1 -1.2 1.2 H4.2 a1.2 1.2 0 0 1 -1.2-1.2 Z"/><path d="M3.2 8.8 L10 12.8 L16.8 8.8"/><path d="M3.4 16 L8.2 11.9 M16.6 16 L11.8 11.9"/></svg></div><div class="act" style="left:1284px;top:14px"><svg viewBox="0 0 20 20"><path d="M10.2 16.2 H5.6 a1.2 1.2 0 0 1 -1.2-1.2 V4 a1.2 1.2 0 0 1 1.2-1.2 h5.2 l3.8 3.8 V12.2"/><path d="M10.8 3 V5.6 a1 1 0 0 0 1 1 H14.4"/><path d="M11.2 14.6 H16.4 M14.5 12.7 L16.4 14.6 L14.5 16.5"/></svg></div><div class="act" style="left:1325.5px;top:14px"><svg viewBox="0 0 20 20"><path d="M4.6 10 V4 a1.2 1.2 0 0 1 1.2-1.2 h5 l3.8 3.8 V10"/><path d="M10.6 3 V5.6 a1 1 0 0 0 1 1 H14.2"/><path d="M3 12.2 L6.2 16.9 M6.2 12.2 L3 16.9 M8 16.9 V12.2 L9.9 14.8 L11.8 12.2 V16.9 M13.8 12.2 V16.9 H17" stroke-width="1.5" stroke-linecap="butt" stroke-linejoin="miter"/></svg></div></div>
<div class="abs" style="left:1540px;top:781.2px;width:117.4px;height:40.6px;border-radius:20.3px;background:#0f4c8a;border:1.8px solid #fff;box-shadow:0 3px 6px rgba(20,40,80,0.22)"></div>
<div class="abs" style="left:1533.4px;top:776.2px;width:44.6px;height:44.6px;border-radius:50%;background:linear-gradient(100deg,#2a7cba 0%,#1a63a3 45%,#0f4c8a 100%);border:2.2px solid #fff"></div>
<svg class="abs" style="left:1544.3px;top:789.8px" width="22" height="20" viewBox="0 0 22 20" fill="none" stroke="#fff" stroke-width="1.25" stroke-linecap="round" stroke-linejoin="round">
<path d="M9.8 10.4 C9 10.9 8 11.1 7.4 11.1 C6.9 11.1 6.5 11.05 6 10.9 L3.4 12.4 L4 9.9 C2.8 9.1 2.1 7.9 2.1 6.6 C2.1 4.2 4.4 2.4 7.4 2.4 C10.2 2.4 12.4 4 12.6 6.2"/>
<path d="M14.6 6.4 C11.8 6.4 9.8 8.2 9.8 10.4 C9.8 12.6 11.8 14.4 14.6 14.4 C15.1 14.4 15.6 14.35 16 14.2 L18.2 15.6 L17.7 13.4 C18.8 12.7 19.4 11.6 19.4 10.4 C19.4 8.2 17.4 6.4 14.6 6.4 Z"/>
<path d="M5.6 6.2 h0.2 M8.4 6.2 h0.2 M13 9.8 h0.2 M15.8 9.8 h0.2" stroke-width="1.4"/>
</svg>
<div class="abs" id="pomoc" style="left:1587px;top:792.4px;height:22px;line-height:22px;font-size:16px;color:#fff;white-space:nowrap">Pomoc</div>
</div>
</body>
</html>
